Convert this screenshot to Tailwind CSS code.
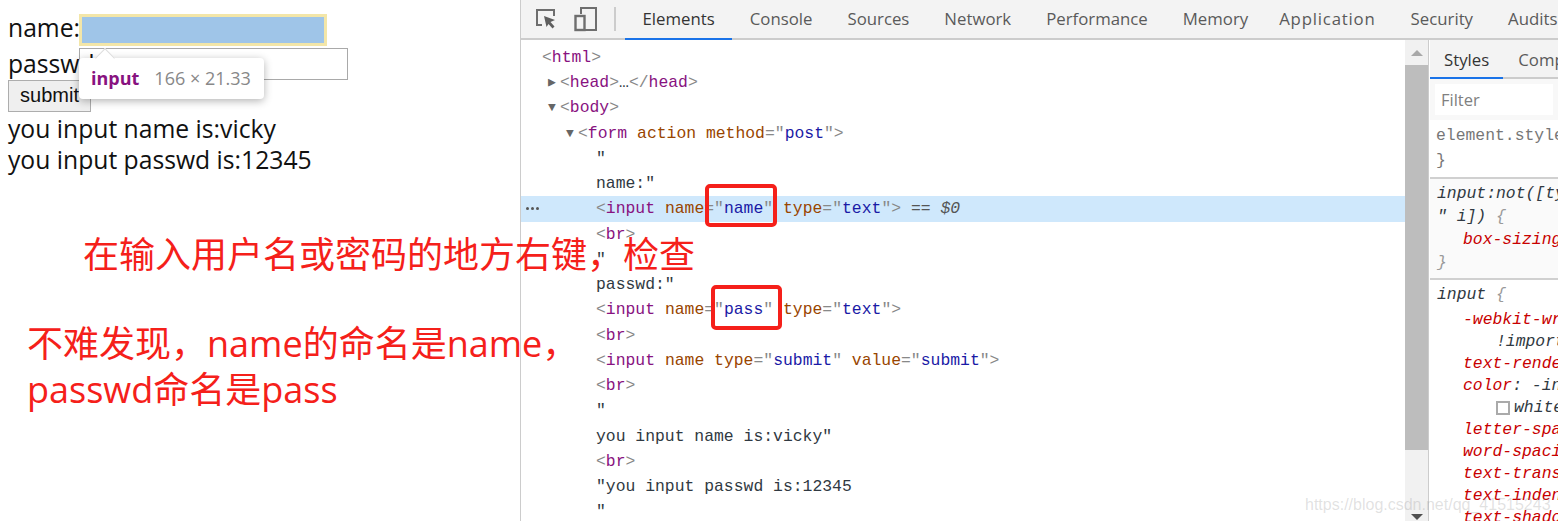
<!DOCTYPE html>
<html lang="zh">
<head>
  <meta charset="UTF-8">
  <title>检查元素</title>
  <script src="https://cdn.jsdelivr.net/npm/@tailwindcss/browser@4"></script>
</head>
<body class="bg-white overflow-hidden">
  <div class="relative flex w-[1558px] h-[521px] overflow-hidden">

    <!-- page being inspected -->
    <div class="w-[520px] shrink-0 pt-[14px] pl-2 text-[24.7px] leading-[31px] text-[#111] font-['Open_Sans','Noto_Sans',sans-serif]">
      <div class="flex h-[32px] items-center">
        <span class="w-[71px] -mt-[6px]">name:</span>
        <div class="w-[248px] h-[32px] border-[3px] border-[#f3e6a8] bg-[#9fc5e8]"></div>
      </div>
      <div class="flex h-[32px] mt-[2px] items-center">
        <span class="w-[71px] -mt-[1px]">passwd:</span>
        <div class="w-[269px] h-[32px] border border-[#a9a9a9]"></div>
      </div>
      <div class="w-[83px] h-[32px] border border-[#adadad] bg-[#efefef] text-[20px] leading-[29px] text-center font-['Liberation_Sans',sans-serif]">submit</div>
      <p class="mt-[1px]">you input name is:vicky</p>
      <p>you input passwd is:12345</p>
    </div>

    <!-- devtools -->
    <div class="flex-1 flex flex-col min-w-0 border-l border-[#ccc]">
      <div class="flex items-center h-[40px] shrink-0 bg-[#f3f3f3] border-b-2 border-[#ccc] text-[16.8px] text-[#5a5a5a] font-['Open_Sans',sans-serif] whitespace-nowrap">
        <div class="flex items-center w-[104px] shrink-0 pl-[14px] h-full">
          <svg width="22" height="24" viewBox="0 0 22 24" fill="none">
            <path d="M7 18H2V3h17v6" stroke="#6e6e6e" stroke-width="2"/>
            <path d="M9 9l11 4-4.5 2 4 4.5-2 2-4-4.5-2 3z" fill="#5f5f5f"/>
          </svg>
          <svg class="ml-[17px]" width="24" height="26" viewBox="0 0 24 26" fill="none">
            <path d="M7 8V2h15v22H11" stroke="#6e6e6e" stroke-width="2"/>
            <rect x="1.5" y="10" width="9" height="14" stroke="#6e6e6e" stroke-width="2.4"/>
          </svg>
          <div class="ml-[16px] w-[2px] h-[24px] bg-[#ccc]"></div>
        </div>
        <div class="relative h-full flex items-center px-[17.5px] text-[#333]">Elements<div class="absolute left-0 right-0 -bottom-[2px] h-[2px] bg-[#1a73e8]"></div></div>
        <div class="px-[17.5px]">Console</div>
        <div class="px-[17.5px]">Sources</div>
        <div class="px-[17.5px]">Network</div>
        <div class="px-[17.5px]">Performance</div>
        <div class="px-[17.5px]">Memory</div>
        <div class="px-[17.5px] -ml-[4px] tracking-[0.8px]">Application</div>
        <div class="px-[17.5px]">Security</div>
        <div class="px-[17.5px]">Audits</div>
      </div>

      <div class="flex flex-1 min-h-0">
        <!-- dom tree -->
        <div class="w-[884px] shrink-0 pt-[5px] text-[16.4px] leading-[25.24px] font-['Liberation_Mono',monospace] text-[#303942] whitespace-nowrap">
          <div class="pl-[21px]"><span class="text-[#888]">&lt;</span><span class="text-[#881280]">html</span><span class="text-[#888]">&gt;</span></div>
          <div class="pl-[27px] flex items-center"><span class="w-[12px] text-[13px] text-[#666]">▶</span><span><span class="text-[#888]">&lt;</span><span class="text-[#881280]">head</span><span class="text-[#888]">&gt;</span>…<span class="text-[#888]">&lt;/</span><span class="text-[#881280]">head</span><span class="text-[#888]">&gt;</span></span></div>
          <div class="pl-[27px] flex items-center"><span class="w-[12px] text-[13px] text-[#666]">▼</span><span><span class="text-[#888]">&lt;</span><span class="text-[#881280]">body</span><span class="text-[#888]">&gt;</span></span></div>
          <div class="pl-[45px] flex items-center"><span class="w-[12px] text-[13px] text-[#666]">▼</span><span><span class="text-[#888]">&lt;</span><span class="text-[#881280]">form</span> <span class="text-[#994500]">action</span> <span class="text-[#994500]">method</span><span class="text-[#888]">=</span><span class="text-[#888]">"</span><span class="text-[#1a1aa6]">post</span><span class="text-[#888]">"&gt;</span></span></div>
          <div class="pl-[75px]">"</div>
          <div class="pl-[75px]">name:"</div>
          <div class="relative pl-[75px] bg-[#cfe8fc]">
            <div class="absolute left-[5px] top-[11px] flex gap-[2px]">
              <div class="w-[3px] h-[3px] rounded-full bg-[#555]"></div>
              <div class="w-[3px] h-[3px] rounded-full bg-[#555]"></div>
              <div class="w-[3px] h-[3px] rounded-full bg-[#555]"></div>
            </div>
            <span class="text-[#888]">&lt;</span><span class="text-[#881280]">input</span> <span class="text-[#994500]">name</span><span class="text-[#888]">="</span><span class="text-[#1a1aa6]">name</span><span class="text-[#888]">"</span> <span class="text-[#994500]">type</span><span class="text-[#888]">="</span><span class="text-[#1a1aa6]">text</span><span class="text-[#888]">"&gt;</span> <span class="italic text-[#555]">== $0</span>
          </div>
          <div class="pl-[75px]"><span class="text-[#888]">&lt;</span><span class="text-[#881280]">br</span><span class="text-[#888]">&gt;</span></div>
          <div class="pl-[75px]">"</div>
          <div class="pl-[75px]">passwd:"</div>
          <div class="pl-[75px]"><span class="text-[#888]">&lt;</span><span class="text-[#881280]">input</span> <span class="text-[#994500]">name</span><span class="text-[#888]">="</span><span class="text-[#1a1aa6]">pass</span><span class="text-[#888]">"</span> <span class="text-[#994500]">type</span><span class="text-[#888]">="</span><span class="text-[#1a1aa6]">text</span><span class="text-[#888]">"&gt;</span></div>
          <div class="pl-[75px]"><span class="text-[#888]">&lt;</span><span class="text-[#881280]">br</span><span class="text-[#888]">&gt;</span></div>
          <div class="pl-[75px]"><span class="text-[#888]">&lt;</span><span class="text-[#881280]">input</span> <span class="text-[#994500]">name</span> <span class="text-[#994500]">type</span><span class="text-[#888]">="</span><span class="text-[#1a1aa6]">submit</span><span class="text-[#888]">"</span> <span class="text-[#994500]">value</span><span class="text-[#888]">="</span><span class="text-[#1a1aa6]">submit</span><span class="text-[#888]">"&gt;</span></div>
          <div class="pl-[75px]"><span class="text-[#888]">&lt;</span><span class="text-[#881280]">br</span><span class="text-[#888]">&gt;</span></div>
          <div class="pl-[75px]">"</div>
          <div class="pl-[75px]">you input name is:vicky"</div>
          <div class="pl-[75px]"><span class="text-[#888]">&lt;</span><span class="text-[#881280]">br</span><span class="text-[#888]">&gt;</span></div>
          <div class="pl-[75px]">"you input passwd is:12345</div>
          <div class="pl-[75px]">"</div>
        </div>

        <!-- scrollbar -->
        <div class="w-[24px] shrink-0 flex flex-col items-center bg-[#f1f1f1] border-r border-[#ccc]">
          <div class="h-[25px] flex items-center"><div class="w-0 h-0 border-x-[6px] border-x-transparent border-b-[6px] border-b-[#a8a8a8]"></div></div>
          <div class="w-full h-[385px] bg-[#bdbdbd]"></div>
          <div class="flex-1 flex items-end pb-[1px]"><div class="w-0 h-0 border-x-[6px] border-x-transparent border-t-[6px] border-t-[#505050]"></div></div>
        </div>

        <!-- styles pane -->
        <div class="flex-1 min-w-0 overflow-hidden ml-[1px]">
          <div class="flex h-[39px] items-center bg-[#f3f3f3] border-b-2 border-[#ccc] text-[16.8px] text-[#5a5a5a] font-['Open_Sans',sans-serif] whitespace-nowrap">
            <div class="relative h-full flex items-center px-[14px] pt-[2px] text-[#333]">Styles<div class="absolute left-0 right-0 -bottom-[2px] h-[2px] bg-[#1a73e8]"></div></div>
            <div class="pl-[15px] pt-[2px]">Computed</div>
          </div>
          <div class="h-[41px] px-[5px] pt-[5px] pb-[5px] bg-[#f8f8f8]"><div class="h-full bg-white pl-[6px] text-[16.5px] leading-[31px] text-[#808080] font-['Open_Sans',sans-serif]">Filter</div></div>
          <div class="text-[16.4px] font-['Liberation_Mono',monospace] text-[#303942] whitespace-nowrap">
            <div class="pl-[6px] pt-[3px] h-[59px] leading-[25px] border-b-2 border-[#d0d0d0] text-[#777]">
              <div>element.style {</div>
              <div>}</div>
            </div>
            <div class="pl-[7px] pt-[3px] h-[101px] leading-[23px] border-b-2 border-[#d0d0d0] bg-[#fafafa] italic">
              <div>input:not([type="image"</div>
              <div>" i]) <span class="text-[#999]">{</span></div>
              <div class="pl-[26px] text-[#c80000]">box-sizing: border-box;</div>
              <div class="text-[#999]">}</div>
            </div>
            <div class="pl-[7px] pt-[4px] leading-[22px] italic">
              <div>input <span class="text-[#999]">{</span></div>
              <div class="mt-[3px] pl-[26px] text-[#c80000]">-webkit-writing-mode:</div>
              <div class="pl-[59px]">!important;</div>
              <div class="pl-[26px] text-[#c80000]">text-rendering: auto;</div>
              <div class="pl-[26px]"><span class="text-[#c80000]">color</span>: -internal-light</div>
              <div class="pl-[59px] flex items-center"><span class="w-[14px] h-[14px] mr-[4px] border-2 border-[#aaa] bg-white shrink-0"></span>white;</div>
              <div class="pl-[26px] text-[#c80000]">letter-spacing: normal;</div>
              <div class="pl-[26px] text-[#c80000]">word-spacing: normal;</div>
              <div class="pl-[26px] text-[#c80000]">text-transform: none;</div>
              <div class="pl-[26px] text-[#c80000]">text-indent: 0px;</div>
              <div class="pl-[26px] text-[#c80000]">text-shadow: none;</div>
            </div>
          </div>
        </div>
      </div>
    </div>

    <!-- element tooltip -->
    <div class="absolute left-[79px] top-[58px] w-[185px] h-[41px] flex items-center pl-[12px] gap-[15px] bg-white rounded-[4px] shadow-[0_2px_8px_rgba(0,0,0,0.3)] text-[18px] font-['Open_Sans',sans-serif] whitespace-nowrap">
      <div class="absolute left-[19px] -top-[7px] w-[14px] h-[14px] rotate-45 bg-white border-l border-t border-[#ddd]"></div>
      <span class="relative font-bold text-[#881280]">input</span><span class="relative text-[#888]">166 × 21.33</span>
    </div>

    <!-- red annotations -->
    <div class="absolute left-[705px] top-[184px] w-[72px] h-[43px] border-[4px] border-[#f5201a] rounded-[5px]"></div>
    <div class="absolute left-[711px] top-[285px] w-[71px] h-[45px] border-[4px] border-[#f5201a] rounded-[5px]"></div>
    <div class="absolute left-[83px] top-[229px] text-[36px] leading-[46px] text-[#f5201a] whitespace-nowrap font-['Noto_Sans_CJK_SC',sans-serif]">在输入用户名或密码的地方右键，检查</div>
    <div class="absolute left-[27px] top-[321px] text-[36px] leading-[46px] text-[#f5201a] whitespace-nowrap font-['Open_Sans','Noto_Sans_CJK_SC',sans-serif]">
      <div>不难发现，name的命名是name，</div>
      <div>passwd命名是pass</div>
    </div>

    <!-- watermark -->
    <div class="absolute right-0 top-[493px] w-[253px] overflow-hidden whitespace-nowrap text-[16px] text-[#888]/25 font-['Liberation_Sans',sans-serif]">https://blog.csdn.net/qq_41515243</div>
  </div>
</body>
</html>
